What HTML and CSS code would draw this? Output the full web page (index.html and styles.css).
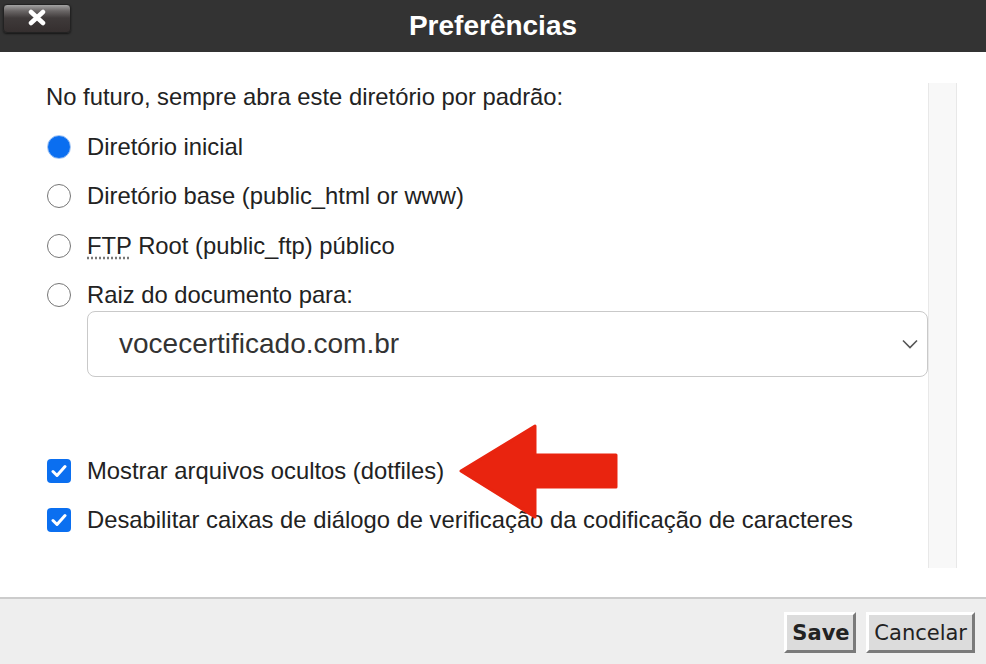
FILE: index.html
```html
<!DOCTYPE html>
<html lang="pt">
<head>
<meta charset="utf-8">
<title>Preferências</title>
<link rel="stylesheet" href="styles.css">
</head>
<body>
<div class="dialog">
  <header class="header">
    <button class="close" type="button" aria-label="Fechar"><svg width="20" height="17" viewBox="0 0 20 17"><path d="M4 3 L16 14 M16 3 L4 14" stroke="#fff" stroke-width="4.5" stroke-linecap="round"/></svg></button>
    <h1 class="title">Preferências</h1>
    <span></span>
  </header>
  <main class="content">
    <div class="form">
      <p class="intro">No futuro, sempre abra este diretório por padrão:</p>
      <div class="row"><span class="radio checked"></span><span class="label">Diretório inicial</span></div>
      <div class="row"><span class="radio"></span><span class="label">Diretório base (public_html or www)</span></div>
      <div class="row"><span class="radio"></span><span class="label"><abbr class="abbr" title="File Transfer Protocol">FTP</abbr> Root (public_ftp) público</span></div>
      <div class="row"><span class="radio"></span><span class="label">Raiz do documento para:</span></div>
      <div class="select">
        <span class="select-text">vocecertificado.com.br</span>
        <svg class="chevron" width="16" height="10" viewBox="0 0 16 10"><path d="M1 1.5 L8 8.5 L15 1.5" fill="none" stroke="#555" stroke-width="1.6"/></svg>
      </div>
      <div class="row row-check"><span class="check"><svg width="16" height="14" viewBox="0 0 16 14"><path d="M2 7.5 L6 11.5 L14 2.5" fill="none" stroke="#fff" stroke-width="3" stroke-linecap="round" stroke-linejoin="round"/></svg></span><span class="label">Mostrar arquivos ocultos (dotfiles)</span></div>
      <div class="row"><span class="check"><svg width="16" height="14" viewBox="0 0 16 14"><path d="M2 7.5 L6 11.5 L14 2.5" fill="none" stroke="#fff" stroke-width="3" stroke-linecap="round" stroke-linejoin="round"/></svg></span><span class="label">Desabilitar caixas de diálogo de verificação da codificação de caracteres</span></div>
      <svg class="arrow" width="162" height="97" viewBox="0 0 162 97"><polygon points="3,48 77,3 77,32 158,32 158,64 77,64 77,94" fill="#e9240f" stroke="#e9240f" stroke-width="3" stroke-linejoin="round"/></svg>
    </div>
    <div class="scrollbar"></div>
  </main>
  <footer class="footer">
    <button class="btn btn-save" type="button">Save</button>
    <button class="btn" type="button">Cancelar</button>
  </footer>
</div>
</body>
</html>
```

FILE: styles.css
```css
* { box-sizing: border-box; }
html, body { margin: 0; padding: 0; }
body {
  width: 986px;
  height: 664px;
  overflow: hidden;
  background: #fff;
  font-family: "Liberation Sans", Arial, Helvetica, sans-serif;
  color: #222;
}
.dialog {
  display: flex;
  flex-direction: column;
  height: 664px;
}
.header {
  height: 52px;
  background: #333;
  display: grid;
  grid-template-columns: 1fr auto 1fr;
  align-items: start;
}
.close {
  justify-self: start;
  margin: 4px 0 0 3px;
  width: 68px;
  height: 29px;
  border: 1px solid #222;
  border-radius: 4px;
  background: linear-gradient(#a3a3a3 0%, #6a6666 22%, #3f3a3a 48%, #352f2f 100%);
  box-shadow: 0 1px 2px rgba(0,0,0,0.6);
  padding: 0;
  display: flex;
  align-items: center;
  justify-content: center;
}
.close svg { margin-top: -3px; }
.title {
  margin: 0;
  color: #fff;
  font-size: 28px;
  font-weight: bold;
  line-height: 52px;
}
.content {
  height: 545px;
  display: flex;
}
.form {
  position: relative;
  flex: 1;
  padding: 29px 0 0 46px;
}
.intro {
  margin: 0;
  height: 32px;
  display: flex;
  align-items: center;
  font-size: 23.8px;
  white-space: nowrap;
}
.row {
  margin-top: 17.5px;
  height: 32px;
  display: flex;
  align-items: center;
  gap: 16px;
  font-size: 23.8px;
}
.label { white-space: nowrap; }
.radio {
  width: 24px;
  height: 24px;
  margin-left: 1px;
  border-radius: 50%;
  border: 1.5px solid #767676;
  background: #fff;
  flex: none;
}
.radio.checked {
  border: 1px solid #9ec3f5;
  background: radial-gradient(circle, #0a6ef0 0, #0a6ef0 62%, #2a82f2 100%);
}
.abbr {
  text-decoration: underline dotted #777;
  text-underline-offset: 4px;
}
.select {
  margin: 0 0 0 41px;
  height: 66px;
  border: 1.5px solid #c9c9c9;
  border-radius: 8px;
  display: flex;
  align-items: center;
  justify-content: space-between;
  padding: 0 9px 0 31px;
  font-size: 28px;
  color: #333;
}
.row-check { margin-top: 77.5px; }
.check {
  width: 24px;
  height: 24px;
  margin-left: 1px;
  border-radius: 4px;
  background: #0b6ff0;
  display: flex;
  align-items: center;
  justify-content: center;
  flex: none;
}
.arrow {
  position: absolute;
  left: 458px;
  top: 371px;
}
.scrollbar {
  width: 29px;
  margin: 31px 29px 29px 0;
  background: #f8f8f8;
  border-left: 1.5px solid #e8e8e8;
  border-right: 1.5px solid #e8e8e8;
}
.footer {
  flex: 1;
  background: #eee;
  border-top: 2px solid #ccc;
  display: flex;
  justify-content: flex-end;
  align-items: flex-start;
  gap: 10px;
  padding: 13px 11px 0 0;
}
.btn {
  height: 41px;
  padding: 0 5px;
  background: #dcdcdc;
  border: 3px solid;
  border-color: #fff #7a7a7a #7a7a7a #fff;
  font-family: "DejaVu Sans", Verdana, sans-serif;
  font-size: 21px;
  color: #222;
}
.btn-save { font-weight: bold; width: 72px; }
```
